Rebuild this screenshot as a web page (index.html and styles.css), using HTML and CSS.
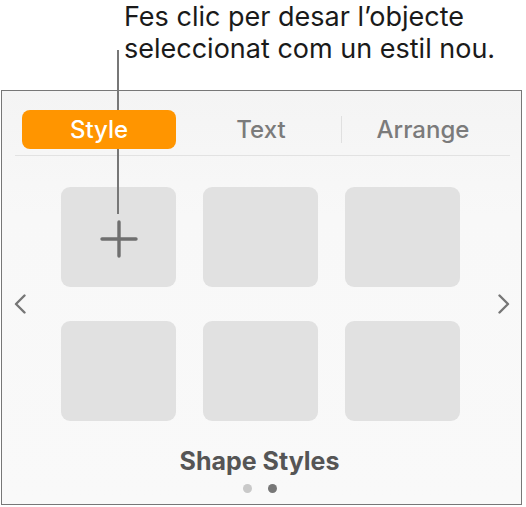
FILE: index.html
```html
<!DOCTYPE html>
<html>
<head>
<meta charset="utf-8">
<title>Shape Styles</title>
<link rel="stylesheet" href="styles.css">
</head>
<body>
<div class="callout">
  <p class="callout-text">Fes clic per desar l’objecte<br>seleccionat com un estil nou.</p>
</div>
<span class="leader"></span>
<div class="panel">
  <div class="tabs">
    <span class="tab tab-on">Style</span>
    <span class="tab">Text</span>
    <span class="tab tab-last">Arrange</span>
  </div>
  <div class="styles">
    <svg class="nav" width="12" height="20" viewBox="0 0 12 20"><polyline points="10.5,1.5 2,10 10.5,18.5" fill="none" stroke="#767676" stroke-width="2.4" stroke-linecap="round" stroke-linejoin="round"/></svg>
    <div class="grid">
      <div class="tile tile-add">
        <svg width="38" height="38" viewBox="0 0 38 38"><path d="M19 2V36M2 19H36" stroke="#6f6f6f" stroke-width="3.4" stroke-linecap="round"/></svg>
      </div>
      <div class="tile"></div>
      <div class="tile"></div>
      <div class="tile"></div>
      <div class="tile"></div>
      <div class="tile"></div>
    </div>
    <svg class="nav nav-next" width="12" height="20" viewBox="0 0 12 20"><polyline points="1.5,1.5 10,10 1.5,18.5" fill="none" stroke="#767676" stroke-width="2.4" stroke-linecap="round" stroke-linejoin="round"/></svg>
  </div>
  <div class="caption">Shape Styles</div>
  <div class="dots"><i></i><i class="on"></i></div>
</div>
</body>
</html>
```

FILE: styles.css
```css
html, body {
	margin:0;
	padding:0;
	background:#fff;
}
body {
	font-family:Inter, "Liberation Sans", sans-serif;
	color:#1a1a1a;
}
.callout {
	height:90px;
}
.callout-text {
	margin:0;
	padding:1px 0 0 124px;
	font-size:27px;
	line-height:32px;
}
.leader {
	position:absolute;
	left:117px;
	top:50px;
	width:2px;
	height:164px;
	background:#777;
}
.panel {
	box-sizing:border-box;
	width:521px;
	height:415px;
	margin-left:1px;
	border:1px solid #777;
	background:linear-gradient(#f4f4f4, #f8f8f8 30%, #f9f9f9);
}
.tabs {
	display:grid;
	grid-template-columns:repeat(3, 154px);
	column-gap:8px;
	width:488px;
	margin:19px 0 0 13px;
	padding:0 0 6px 7px;
	border-bottom:1px solid #e2e2e2;
}
.tab {
	position:relative;
	height:39px;
	line-height:39px;
	text-align:center;
	font-size:24px;
	font-weight:500;
	color:#7b7b7b;
	border-radius:8px;
}
.tab-on {
	background:#ff9500;
	color:#fff;
}
.tab-last:before {
	content:"";
	position:absolute;
	left:-5px;
	top:6px;
	bottom:6px;
	width:1px;
	background:#e0e0e0;
}
.styles {
	display:flex;
	align-items:center;
	margin-top:31px;
	padding-left:12px;
}
.nav {
	display:block;
	flex:none;
}
.grid {
	display:grid;
	grid-template-columns:repeat(3, 115px);
	grid-auto-rows:100px;
	column-gap:27px;
	row-gap:34px;
	margin-left:35px;
}
.nav-next {
	margin-left:38px;
}
.tile {
	border-radius:9px;
	background:#e1e1e1;
}
.tile-add {
	display:flex;
	align-items:center;
	justify-content:center;
	padding-top:4px;
	box-sizing:border-box;
}
.caption {
	margin-top:25px;
	text-align:center;
	font-size:25px;
	font-weight:700;
	line-height:30px;
	color:#555;
	padding-right:4px;
}
.dots {
	display:flex;
	justify-content:center;
	gap:16px;
	margin-top:8px;
	padding-right:4px;
}
.dots i {
	width:9px;
	height:9px;
	border-radius:50%;
	background:#c9c9c9;
}
.dots i.on {
	background:#777;
}
```
